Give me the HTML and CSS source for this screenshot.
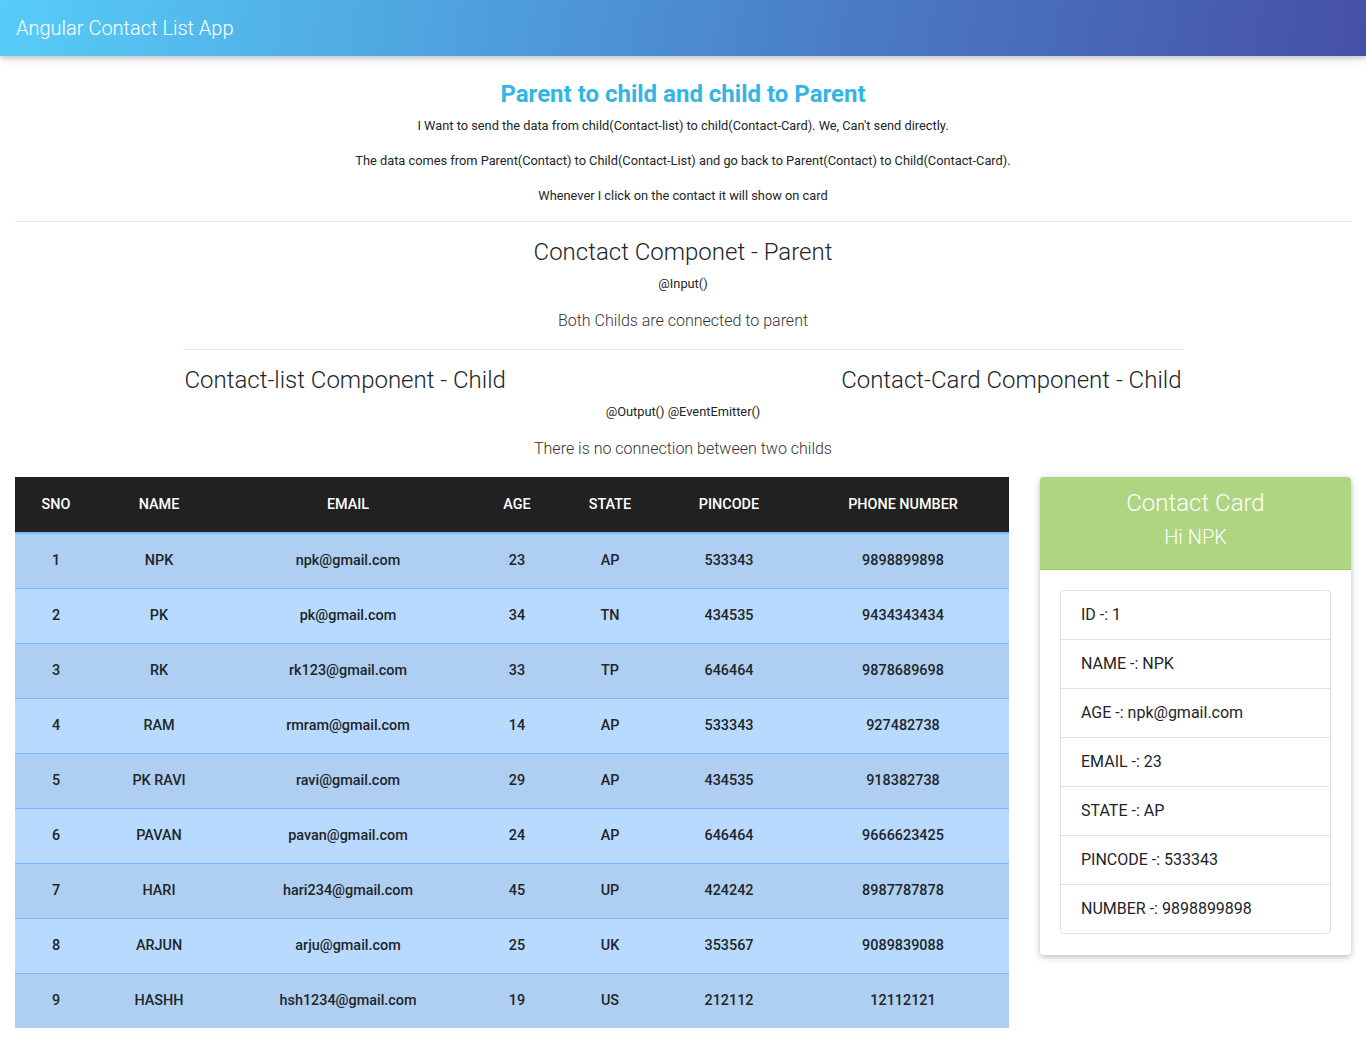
FILE: index.html
```html
<!DOCTYPE html>
<html lang="en">
<head>
<meta charset="utf-8">
<title>Angular Contact List App</title>
<link rel="stylesheet" href="styles.css">
</head>
<body>
<nav class="navbar"><span class="brand">Angular Contact List App</span></nav>
<main class="page">
  <section class="intro">
    <h3 class="title">Parent to child and child to Parent</h3>
    <p class="small">I Want to send the data from child(Contact-list) to child(Contact-Card). We, Can't send directly.</p>
    <p class="small">The data comes from Parent(Contact) to Child(Contact-List) and go back to Parent(Contact) to Child(Contact-Card).</p>
    <p class="small">Whenever I click on the contact it will show on card</p>
  </section>
  <hr class="rule">
  <section class="parent">
    <h4 class="comp">Conctact Componet - Parent</h4>
    <p class="small">@Input()</p>
    <p class="lead">Both Childs are connected to parent</p>
    <hr class="rule narrow">
    <div class="children">
      <h4 class="comp">Contact-list Component - Child</h4>
      <h4 class="comp">Contact-Card Component - Child</h4>
    </div>
    <p class="small">@Output() @EventEmitter()</p>
    <p class="lead">There is no connection between two childs</p>
  </section>
  <div class="content">
    <table class="contacts">
      <colgroup>
        <col class="c1"><col class="c2"><col class="c3"><col class="c4"><col class="c5"><col class="c6"><col class="c7">
      </colgroup>
      <thead>
        <tr><th>SNO</th><th>NAME</th><th>EMAIL</th><th>AGE</th><th>STATE</th><th>PINCODE</th><th>PHONE NUMBER</th></tr>
      </thead>
      <tbody>
        <tr><td>1</td><td>NPK</td><td>npk@gmail.com</td><td>23</td><td>AP</td><td>533343</td><td>9898899898</td></tr>
        <tr><td>2</td><td>PK</td><td>pk@gmail.com</td><td>34</td><td>TN</td><td>434535</td><td>9434343434</td></tr>
        <tr><td>3</td><td>RK</td><td>rk123@gmail.com</td><td>33</td><td>TP</td><td>646464</td><td>9878689698</td></tr>
        <tr><td>4</td><td>RAM</td><td>rmram@gmail.com</td><td>14</td><td>AP</td><td>533343</td><td>927482738</td></tr>
        <tr><td>5</td><td>PK RAVI</td><td>ravi@gmail.com</td><td>29</td><td>AP</td><td>434535</td><td>918382738</td></tr>
        <tr><td>6</td><td>PAVAN</td><td>pavan@gmail.com</td><td>24</td><td>AP</td><td>646464</td><td>9666623425</td></tr>
        <tr><td>7</td><td>HARI</td><td>hari234@gmail.com</td><td>45</td><td>UP</td><td>424242</td><td>8987787878</td></tr>
        <tr><td>8</td><td>ARJUN</td><td>arju@gmail.com</td><td>25</td><td>UK</td><td>353567</td><td>9089839088</td></tr>
        <tr><td>9</td><td>HASHH</td><td>hsh1234@gmail.com</td><td>19</td><td>US</td><td>212112</td><td>12112121</td></tr>
      </tbody>
    </table>
    <aside class="card">
      <div class="card-header">
        <div class="card-title">Contact Card</div>
        <div class="card-sub">Hi NPK</div>
      </div>
      <div class="card-body">
        <ul class="list">
          <li>ID -: 1</li>
          <li>NAME -: NPK</li>
          <li>AGE -: npk@gmail.com</li>
          <li>EMAIL -: 23</li>
          <li>STATE -: AP</li>
          <li>PINCODE -: 533343</li>
          <li>NUMBER -: 9898899898</li>
        </ul>
      </div>
    </aside>
  </div>
</main>
</body>
</html>
```

FILE: styles.css
```css
* { box-sizing: border-box; }
html, body { margin: 0; padding: 0; }
body {
  font-family: Roboto, "Liberation Sans", Arial, sans-serif;
  font-weight: 400;
  color: #212529;
  background: #fff;
  font-size: 16px;
  line-height: 1.5;
}
.navbar {
  height: 56px;
  display: flex;
  align-items: center;
  padding: 0 16px;
  background: linear-gradient(100deg, #57cdf9 0%, #4fa6df 30%, #4a78c4 65%, #4650a8 100%);
  box-shadow: 0 2px 5px 0 rgba(0,0,0,.16), 0 2px 10px 0 rgba(0,0,0,.12);
}
.brand {
  color: #fff;
  font-size: 20px;
  font-weight: 300;
  line-height: 1.5;
}
.page { padding: 0 15px; }
.intro { text-align: center; padding-top: 24px; }
.title {
  margin: 0 0 7px;
  font-size: 24px;
  font-weight: 700;
  line-height: 1.2;
  color: #33b5e5;
}
.small {
  font-size: 12.8px;
  line-height: 1.5;
  margin: 0 0 16px;
}
.rule {
  border: 0;
  border-top: 1px solid rgba(0,0,0,.1);
  margin: 16px 0;
}
.intro + .rule { margin-top: 0; }
.parent { text-align: center; }
.comp {
  margin: 0 0 7px;
  font-size: 24px;
  font-weight: 300;
  line-height: 1.2;
}
.lead {
  margin: 0 0 16px;
  font-size: 16px;
  font-weight: 300;
  line-height: 1.5;
  color: #333;
}
.narrow {
  width: 1001px;
  margin: 0 auto 16px;
}
.children {
  width: 1001px;
  margin: 0 auto;
  display: flex;
  justify-content: space-between;
  padding: 0 2px;
}
.content {
  display: flex;
  align-items: flex-start;
  gap: 31px;
}
.contacts {
  width: 994px;
  border-collapse: collapse;
  table-layout: fixed;
  font-size: 14.4px;
  text-align: center;
}
.c1 { width: 82px; }
.c2 { width: 124px; }
.c3 { width: 254px; }
.c4 { width: 84px; }
.c5 { width: 102px; }
.c6 { width: 136px; }
.c7 { width: 212px; }
.contacts thead th {
  background: #212121;
  color: #fff;
  font-weight: 500;
  height: 56px;
  padding: 0 8px;
}
.contacts tbody td {
  height: 55px;
  padding: 0 8px;
  font-weight: 500;
  color: #212529;
  border-top: 1px solid #7abaff;
  background: #b8daff;
}
.contacts tbody tr:first-child td { border-top-width: 2px; height: 55px; }
.contacts tbody tr:nth-child(odd) td { background: #afcff2; }
.card {
  width: 311px;
  background: #fff;
  border-radius: 4px;
  box-shadow: 0 2px 5px 0 rgba(0,0,0,.16), 0 2px 10px 0 rgba(0,0,0,.12);
  overflow: hidden;
}
.card-header {
  background: #aed581;
  border-bottom: 1px solid #9cc572;
  color: #fff;
  text-align: center;
  height: 93px;
  padding-top: 10px;
}
.card-title {
  font-size: 24px;
  font-weight: 300;
  line-height: 32px;
}
.card-sub {
  font-size: 20px;
  font-weight: 300;
  line-height: 28px;
  margin-top: 4px;
}
.card-body { padding: 20px 20px 21px; }
.list {
  list-style: none;
  margin: 0;
  padding: 0;
  border: 1px solid rgba(0,0,0,.125);
  border-radius: 4px;
}
.list li {
  padding: 12px 20px;
  font-size: 16px;
  line-height: 24px;
  border-top: 1px solid rgba(0,0,0,.125);
}
.list li:first-child { border-top: 0; }
```
